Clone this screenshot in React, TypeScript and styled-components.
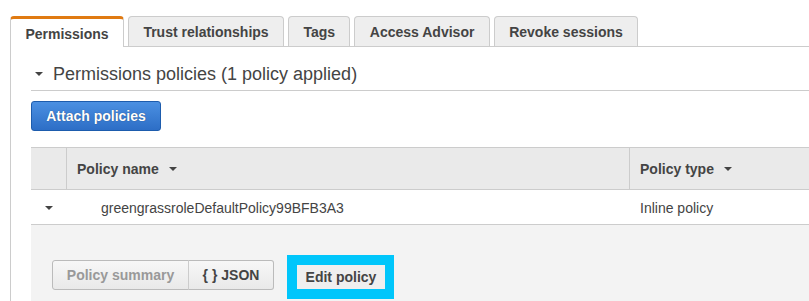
import React from "react";
import styled, { createGlobalStyle } from "styled-components";

const Global = createGlobalStyle`
  html, body { margin: 0; padding: 0; background: #fff; overflow: hidden; }
  body { font-family: "Liberation Sans", Arial, Helvetica, sans-serif; color: #444; }
  * { box-sizing: border-box; }
`;

const Page = styled.div`
  width: 809px;
  height: 301px;
  overflow: hidden;
  padding: 16px 0 0 10px;
`;

const TabBar = styled.div`
  display: flex;
  gap: 4px;
  border-bottom: 1px solid #ccc;
  height: 31px;
  width: 900px;
`;

const Tab = styled.div<{ $active?: boolean }>`
  height: ${(p) => (p.$active ? "31px" : "30px")};
  padding: 0 14.4px;
  display: flex;
  align-items: center;
  justify-content: center;
  font-size: 14px;
  font-weight: bold;
  color: #444;
  border: 1px solid #ccc;
  border-bottom: none;
  border-radius: 4px 4px 0 0;
  background: ${(p) => (p.$active ? "#fff" : "#eee")};
  ${(p) => (p.$active ? "border-top: 3px solid #e07a12; width: 114px; padding-top: 1px;" : "")}
  position: relative;
  margin-bottom: ${(p) => (p.$active ? "-1px" : "0")};
  white-space: nowrap;
`;

const Panel = styled.div`
  border-left: 1px solid #ccc;
  padding: 13px 0 0 20px;
  height: 260px;
`;

const SectionHeader = styled.div`
  display: flex;
  align-items: center;
  gap: 10px;
  height: 31px;
  padding-left: 4px;
  border-bottom: 1px solid #ccc;
  font-size: 18px;
  color: #444;
  padding-bottom: 2px;
`;

const Caret = styled.span<{ $size?: number }>`
  display: inline-block;
  width: 0;
  height: 0;
  border-left: ${(p) => p.$size ?? 4}px solid transparent;
  border-right: ${(p) => p.$size ?? 4}px solid transparent;
  border-top: ${(p) => p.$size ?? 4}px solid #444;
  flex: none;
`;

const PrimaryButton = styled.button`
  margin-top: 10px;
  height: 30px;
  width: 130px;
  border: 1px solid #1d5cad;
  border-radius: 3px;
  background: linear-gradient(#4b90e2, #2d6ec6);
  color: #fff;
  font-family: inherit;
  font-size: 14px;
  font-weight: bold;
  text-shadow: 0 0 1px rgba(0, 0, 0, 0.5);
  padding: 0;
`;

const Table = styled.div`
  margin-top: 16px;
  width: 900px;
`;

const HeaderRow = styled.div`
  display: grid;
  grid-template-columns: 35px 563px 1fr;
  height: 43px;
  background: #eaeaea;
  border-top: 1px solid #ccc;
  border-bottom: 1px solid #ccc;
`;

const HeaderCell = styled.div<{ $divider?: boolean }>`
  display: flex;
  align-items: center;
  gap: 10px;
  padding-left: 10px;
  font-size: 14px;
  font-weight: bold;
  color: #444;
  ${(p) => (p.$divider ? "border-left: 1px solid #ccc;" : "")}
`;

const BodyRow = styled.div`
  display: grid;
  grid-template-columns: 35px 563px 1fr;
  height: 35px;
  border-bottom: 1px solid #ccc;
  font-size: 14px;
  color: #444;
`;

const BodyCell = styled.div<{ $pad?: number; $center?: boolean }>`
  display: flex;
  align-items: center;
  justify-content: ${(p) => (p.$center ? "center" : "flex-start")};
  padding-left: ${(p) => p.$pad ?? 0}px;
  padding-top: 1px;
`;

const Expanded = styled.div`
  background: #f3f3f3;
  height: 80px;
  padding: 30px 0 0 21px;
  display: flex;
  align-items: flex-start;
  gap: 13px;
`;

const ToggleGroup = styled.div`
  display: flex;
  margin-top: 5px;
`;

const ToggleButton = styled.button<{ $first?: boolean; $disabled?: boolean }>`
  height: 30px;
  padding: 0;
  width: ${(p) => (p.$first ? "137px" : "86px")};
  border: 1px solid #bbb;
  ${(p) => (p.$first ? "border-radius: 3px 0 0 3px;" : "border-radius: 0 3px 3px 0; border-left: 1px solid #ccc;")}
  ${(p) => (p.$first ? "" : "margin-left: -1px;")}
  background: linear-gradient(#f7f7f7, #e9e9e9);
  color: ${(p) => (p.$disabled ? "#999" : "#444")};
  font-family: inherit;
  font-size: 14px;
  font-weight: bold;
`;

const Highlight = styled.div`
  border: 10px solid #00c6fb;
  border-right-width: 9px;
  width: 107px;
  height: 44px;
  background: #fff;
`;

const PlainButton = styled.button`
  width: 100%;
  height: 100%;
  border: none;
  padding: 0;
  background: #efefef;
  color: #444;
  font-family: inherit;
  font-size: 14px;
  font-weight: bold;
`;

export default function App() {
  return (
    <>
      <Global />
      <Page>
        <TabBar>
          <Tab $active>Permissions</Tab>
          <Tab>Trust relationships</Tab>
          <Tab>Tags</Tab>
          <Tab>Access Advisor</Tab>
          <Tab>Revoke sessions</Tab>
        </TabBar>
        <Panel>
          <SectionHeader>
            <Caret $size={4} />
            Permissions policies (1 policy applied)
          </SectionHeader>
          <PrimaryButton>Attach policies</PrimaryButton>
          <Table>
            <HeaderRow>
              <HeaderCell />
              <HeaderCell $divider>
                Policy name <Caret $size={4} />
              </HeaderCell>
              <HeaderCell $divider>
                Policy type <Caret $size={4} />
              </HeaderCell>
            </HeaderRow>
            <BodyRow>
              <BodyCell $center>
                <Caret $size={4} />
              </BodyCell>
              <BodyCell $pad={35}>greengrassroleDefaultPolicy99BFB3A3</BodyCell>
              <BodyCell $pad={11}>Inline policy</BodyCell>
            </BodyRow>
            <Expanded>
              <ToggleGroup>
                <ToggleButton $first $disabled>Policy summary</ToggleButton>
                <ToggleButton>{"{ } JSON"}</ToggleButton>
              </ToggleGroup>
              <Highlight>
                <PlainButton>Edit policy</PlainButton>
              </Highlight>
            </Expanded>
          </Table>
        </Panel>
      </Page>
    </>
  );
}
